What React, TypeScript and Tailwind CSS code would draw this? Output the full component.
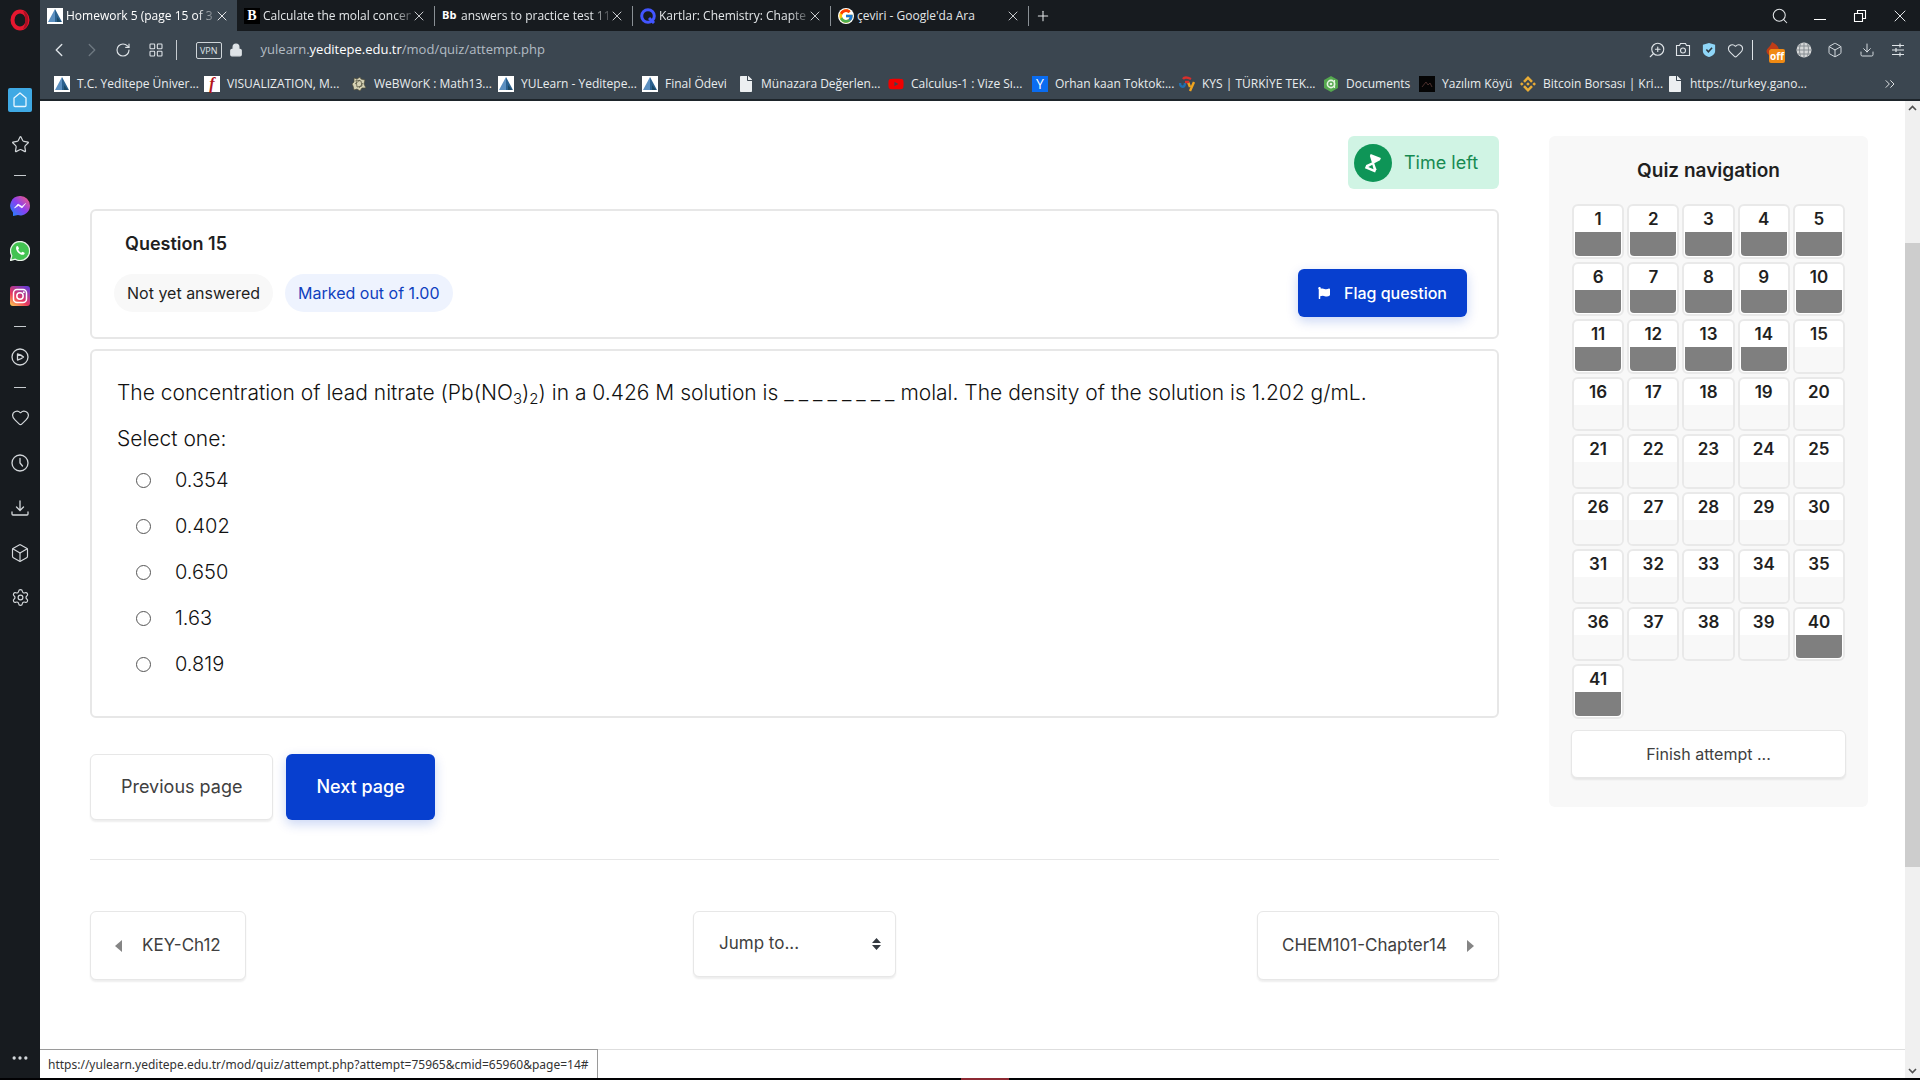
import React from "react";
import {
  ChevronLeft, ChevronRight, RotateCw, LayoutGrid, Lock, X, Plus, Search, ZoomIn, Camera, Heart,
  Box, Download, Star, Settings, ChevronsRight, Ellipsis,
} from "lucide-react";
import { FaFlag, FaYoutube, FaFile } from "react-icons/fa";
import { FcGoogle } from "react-icons/fc";
import { SiBinance } from "react-icons/si";

function YeditepeIcon() {
  return (
    <svg viewBox="0 0 16 16" className="size-4 shrink-0">
      <rect width="16" height="16" fill="#fff" />
      <path d="M8 1 1 14h7z" fill="#5b8fc0" />
      <path d="M8 1v13h7z" fill="#2b618f" />
      <path d="m10 9 4 5h-4z" fill="#1b4965" />
    </svg>
  );
}

function Hexagons() {
  return (
    <svg viewBox="0 0 16 16" className="size-4 shrink-0" fill="none" stroke="#4c4a38" strokeWidth="0.7">
      <path d="m3 2 3 1 3-2 1 2 4 1-1 4 2 4-4 0-2 3-3-2-3 1-1-4-1-2 2-2z" fill="#d5d1b4" />
      <path d="m5 4 5 1 1 5-5 1zM4 8l5-4M8 12l4-5" />
    </svg>
  );
}

function KysIcon() {
  return (
    <svg viewBox="0 0 16 16" className="size-4 shrink-0" fill="none" strokeWidth="2.4">
      <path d="M4 3c2-3 6-1 8 0" stroke="#d92f2c" />
      <path d="M1 7c0 5 5 5 5 0" stroke="#1f6fb0" />
      <path d="m9 6 2 5M15 6l-4 9" stroke="#f0a51e" />
      <path d="M6 6h4" stroke="#d92f2c" />
    </svg>
  );
}

function GreenHex() {
  return (
    <svg viewBox="0 0 16 16" className="size-4 shrink-0">
      <path d="m8 0 7 4v8l-7 4-7-4V4z" fill="#55a84f" />
      <circle cx="8" cy="8" r="3.6" fill="none" stroke="#e4f4e2" strokeWidth="1.6" />
      <circle cx="8" cy="8" r="1.3" fill="#e4f4e2" />
      <path d="M11.500 4v8" stroke="#e4f4e2" strokeWidth="1.2" />
    </svg>
  );
}

function BlackIcon() {
  return (
    <svg viewBox="0 0 16 16" className="size-4 shrink-0">
      <rect width="16" height="16" fill="#050505" />
      <path d="m3 11 4-5 2 3 2-2 2 4" fill="none" stroke="#4a2f2c" strokeWidth="1" />
    </svg>
  );
}

function PageIcon() {
  return <FaFile className="h-4 w-4 shrink-0 text-[#eceff1]" />;
}

const bookmarks: { label: string; icon: React.ReactNode; width: string }[] = [
  { label: "T.C. Yeditepe Üniver...", width: "w-[150px]", icon: <YeditepeIcon /> },
  { label: "VISUALIZATION, M...", width: "w-[147px]", icon: <span className="flex size-4 shrink-0 items-center justify-center bg-white font-['Liberation_Serif',serif] text-base leading-4 font-bold text-[#b3151b] italic">f</span> },
  { label: "WeBWorK : Math13...", width: "w-[147px]", icon: <Hexagons /> },
  { label: "YULearn - Yeditepe...", width: "w-36", icon: <YeditepeIcon /> },
  { label: "Final Ödevi", width: "w-24", icon: <YeditepeIcon /> },
  { label: "Münazara Değerlen...", width: "w-[150px]", icon: <PageIcon /> },
  { label: "Calculus-1 : Vize Sı...", width: "w-36", icon: <FaYoutube className="size-4 shrink-0 text-[#f00000]" /> },
  { label: "Orhan kaan Toktok:...", width: "w-[147px]", icon: <span className="flex size-4 shrink-0 items-center justify-center bg-[#0a6cf0] text-sm leading-4 text-white">Y</span> },
  { label: "KYS | TÜRKİYE TEK...", width: "w-36", icon: <KysIcon /> },
  { label: "Documents", width: "w-24", icon: <GreenHex /> },
  { label: "Yazılım Köyü", width: "w-[101px]", icon: <BlackIcon /> },
  { label: "Bitcoin Borsası | Kri...", width: "w-[147px]", icon: <SiBinance className="size-4 shrink-0 text-[#e9ac35]" /> },
  { label: "https://turkey.gano...", width: "w-[147px]", icon: <PageIcon /> },
];

const tabs: { label: string; icon: React.ReactNode }[] = [
  { label: "Homework 5 (page 15 of 3", icon: <YeditepeIcon /> },
  { label: "Calculate the molal concen", icon: <span className="flex size-4 shrink-0 items-center justify-center bg-black font-['Liberation_Serif',serif] text-sm leading-4 font-bold text-white">B</span> },
  { label: "answers to practice test 11.", icon: <span className="w-4 shrink-0 text-[11px] font-bold text-white">Bb</span> },
  {
    label: "Kartlar: Chemistry: Chapter",
    icon: (
      <svg viewBox="0 0 16 16" className="size-4 shrink-0" fill="none" stroke="#4255ff" strokeWidth="3">
        <circle cx="8" cy="8" r="6.300" />
        <path d="m9 10 5 5" />
      </svg>
    ),
  },
  { label: "çeviri - Google'da Ara", icon: <span className="flex size-4 shrink-0 items-center justify-center rounded-full bg-white"><FcGoogle className="size-4" /></span> },
];

function TabStrip() {
  return (
    <div className="flex h-[31px] items-stretch bg-[#171b1f] text-xs text-[#e3e6e8]">
      {tabs.map((t, i) => (
        <div key={t.label} className={i === 0 ? "flex w-[197px] items-center bg-[#3b4650] text-white" : "flex w-[198px] items-center"}>
          <div className="flex min-w-0 flex-1 items-center gap-[3px] pl-[7px]">
            {t.icon}
            <span className={i < 4 ? "min-w-0 flex-1 whitespace-nowrap [mask-image:linear-gradient(to_right,black_88%,transparent_104%)]" : "min-w-0 flex-1 whitespace-nowrap"}>{t.label}</span>
          </div>
          <button aria-label="Close tab" className="mr-[7px] flex w-4 items-center justify-center">
            <X className="size-4" strokeWidth={1.3} />
          </button>
          {i > 0 && <span className="h-5 w-px bg-[#8a9095]" />}
        </div>
      ))}
      <button aria-label="New tab" className="flex w-7 items-center justify-center">
        <Plus className="size-4" strokeWidth={1.6} />
      </button>
      <div className="ml-auto flex items-center">
        <button aria-label="Search tabs" className="flex w-10 justify-center"><Search className="size-[18px]" strokeWidth={1.4} /></button>
        <button aria-label="Minimize" className="flex w-10 justify-center pt-2"><span className="h-px w-3 bg-white" /></button>
        <button aria-label="Restore" className="flex w-10 justify-center">
          <svg viewBox="0 0 14 14" className="size-[14px]" fill="none" stroke="white" strokeWidth="1.100"><path d="M1.500 4.500h8v8h-8zM4.500 4.500v-3h8v8h-3" /></svg>
        </button>
        <button aria-label="Close" className="flex w-10 justify-center"><X className="size-5" strokeWidth={1.2} /></button>
      </div>
    </div>
  );
}

function Toolbar() {
  return (
    <div className="flex h-[38px] items-center bg-[#3b4650] text-[#dfe4e8]">
      <button aria-label="Back" className="ml-[6px] flex w-[25px] justify-center"><ChevronLeft className="size-[22px]" strokeWidth={1.5} /></button>
      <button aria-label="Forward" className="ml-2 flex w-[25px] justify-center text-[#6e7880]"><ChevronRight className="size-[22px]" strokeWidth={1.5} /></button>
      <button aria-label="Reload" className="ml-[6px] flex w-[25px] justify-center"><RotateCw className="size-4" strokeWidth={1.7} /></button>
      <button aria-label="Speed dial" className="ml-2 flex w-[25px] justify-center"><LayoutGrid className="size-4" strokeWidth={1.6} /></button>
      <span className="ml-2 h-5 w-px bg-[#c5cbd0]" />
      <span className="ml-[19px] rounded-xs border border-[#cfd5d9] px-[3px] text-[9px] leading-[15px]">VPN</span>
      <Lock className="ml-[7px] size-[14px]" fill="#dfe4e8" strokeWidth={2} />
      <span className="ml-[18px] text-[13px] whitespace-nowrap text-[#b3bcc4]">
        yulearn.<span className="text-white">yeditepe.edu.tr</span>/mod/quiz/attempt.php
      </span>
      <div className="ml-auto flex items-center">
        <button aria-label="Zoom" className="flex w-[26px] justify-center"><ZoomIn className="size-[18px] -scale-x-100" strokeWidth={1.5} /></button>
        <button aria-label="Snapshot" className="flex w-[26px] justify-center">
          <svg viewBox="0 0 16 16" className="size-4" fill="none" stroke="currentColor" strokeWidth="1.100"><path d="M1.500 3.500h3l1-2h5l1 2h3v10h-13z" /><circle cx="8" cy="8.500" r="2.500" /></svg>
        </button>
        <button aria-label="Ad blocker" className="flex w-[26px] justify-center">
          <svg viewBox="0 0 16 18" className="h-4 w-[14px]"><path d="M8 1 15 3v7c0 4-4 6-7 7-3-1-7-3-7-7V3z" fill="#8fd6f8" /><path d="m5 8.500 2.300 2.500L11.500 6.500" fill="none" stroke="#2c3943" strokeWidth="1.800" /></svg>
        </button>
        <button aria-label="Favourite" className="flex w-[26px] justify-center"><Heart className="size-[17px]" strokeWidth={1.5} /></button>
        <span className="mx-1 h-5 w-px bg-[#dfe4e8]" />
        <button aria-label="Extension, off" className="relative flex w-[31px] justify-center">
          <svg viewBox="0 0 16 18" className="h-[18px] w-4"><path d="M7 1c4 2 9 6 6 11-2 4-9 4-11 0C0 8 5 7 7 1z" fill="#bf3c16" /><circle cx="5.500" cy="9" r="1" fill="#222" /><circle cx="10" cy="9" r="1" fill="#222" /></svg>
          <span className="absolute top-2 left-3 rounded-xs bg-[#f08a13] px-px text-[10px] leading-[14px] font-bold text-white">off</span>
        </button>
        <button aria-label="Web extension" className="flex w-[31px] justify-center">
          <svg viewBox="0 0 16 16" className="size-4"><circle cx="8" cy="8" r="7.500" fill="#d5d7d8" /><path d="M8 0v16M0 8h16M1.500 4h13M1.500 12h13M5 1c-2 4-2 10 0 14M11 1c2 4 2 10 0 14" fill="none" stroke="#868d92" /></svg>
        </button>
        <button aria-label="Wallet" className="flex w-8 justify-center"><Box className="size-4" strokeWidth={1.4} /></button>
        <button aria-label="Downloads" className="flex w-8 justify-center"><Download className="size-4" strokeWidth={1.4} /></button>
        <button aria-label="Easy setup" className="mr-[7px] flex w-[30px] justify-center">
          <svg viewBox="0 0 14 14" className="size-[14px]" fill="none" stroke="currentColor" strokeWidth="1.200"><path d="M1 2.500h12M1 7h12M1 11.500h12M9 .5v4M5 5v4M9 9.500v4" /></svg>
        </button>
      </div>
    </div>
  );
}

function BookmarksBar() {
  return (
    <nav className="flex h-8 items-center border-b-2 border-[#1d242a] bg-[#3b4650] pb-px pl-[14px] text-xs text-[#e9ecee]">
      {bookmarks.map((b) => (
        <a key={b.label} href="#" className={`${b.width} flex items-center gap-[7px] whitespace-nowrap`}>
          {b.icon}
          <span>{b.label}</span>
        </a>
      ))}
      <button aria-label="More bookmarks" className="mr-[22px] ml-auto"><ChevronsRight className="size-4" strokeWidth={1.4} /></button>
    </nav>
  );
}

function Item({ label, children }: { label: string; children: React.ReactNode }) {
  return <button aria-label={label} className="flex h-[45px] w-full items-center justify-center">{children}</button>;
}

function Dash() {
  return <div className="flex h-4 items-center justify-center"><span className="h-px w-3 bg-[#c7cbce]" /></div>;
}

function Sidebar() {
  return (
    <aside className="flex w-10 shrink-0 flex-col bg-[#171b1f] text-[#d3d7da]">
      <button aria-label="Opera menu" className="mb-[37px] flex h-10 items-center justify-center">
        <svg viewBox="0 0 22 24" className="h-6 w-[22px]"><ellipse cx="11" cy="12" rx="7.500" ry="8.500" fill="none" stroke="#e5172f" strokeWidth="4" /><path d="M14 3c7 1 7 17 0 18 3-4 3-14 0-18z" fill="#a80f22" /></svg>
      </button>
      <Item label="Home">
        <span className="flex size-6 items-center justify-center rounded-xs bg-[#3fa9e4]">
          <svg viewBox="0 0 18 18" className="size-[18px]" fill="none" stroke="#e8f6ff" strokeWidth="1.300" strokeLinejoin="round"><path d="M3 7 9 2l6 5v7.500q0 1-1 1H4q-1 0-1-1z" /></svg>
        </span>
      </Item>
      <Item label="Bookmarks"><Star className="size-[19px]" strokeWidth={1.5} /></Item>
      <Dash />
      <Item label="Messenger">
        <svg viewBox="0 0 20 20" className="size-5">
          <defs><linearGradient id="msg" x1="0" y1="1" x2="1" y2="0"><stop offset="0" stopColor="#168aff" /><stop offset=".5" stopColor="#8a3ff0" /><stop offset="1" stopColor="#ff5f73" /></linearGradient></defs>
          <path d="M10 0a9.700 9.700 0 0 1 10 9.700 9.700 9.700 0 0 1-12 9.400L3 20v-3.500A9.700 9.700 0 0 1 10 0z" fill="url(#msg)" />
          <path d="m4.500 12 3.500-4 4 2.500L15.500 7.500 12 12 8.500 9.500z" fill="white" stroke="white" strokeWidth=".6" />
        </svg>
      </Item>
      <Item label="WhatsApp">
        <svg viewBox="0 0 20 20" className="size-5">
          <path d="M10 .5A9.500 9.500 0 1 1 5.300 18.200L.5 19.500l1.300-4.800A9.500 9.500 0 0 1 10 .5z" fill="#43c351" stroke="#e9f3e9" strokeWidth="1.300" />
          <path d="M6.500 5.500c1-1 1.500-.5 2.500 2l-.8 1.300c.6 1.400 1.600 2.300 3 3l1.300-1.100c2.500 1 2.500 1.500 1.700 2.500-2.700 2.700-10-3.700-7.700-7.700z" fill="white" />
        </svg>
      </Item>
      <Item label="Instagram">
        <svg viewBox="0 0 20 20" className="size-5">
          <defs><linearGradient id="ig" x1=".1" y1="1" x2=".8" y2="0"><stop offset="0" stopColor="#fdc352" /><stop offset=".4" stopColor="#ea3a5d" /><stop offset="1" stopColor="#6a3bd0" /></linearGradient></defs>
          <rect width="20" height="20" rx="3" fill="url(#ig)" />
          <g fill="none" stroke="white" strokeWidth="1.500"><rect x="3.500" y="3.500" width="13" height="13" rx="3.500" /><circle cx="10" cy="10" r="3.200" /></g>
          <circle cx="13.800" cy="6.200" r="1" fill="white" />
        </svg>
      </Item>
      <Dash />
      <Item label="Player">
        <svg viewBox="0 0 18 18" className="size-[18px]" fill="none" stroke="currentColor" strokeWidth="1.300" strokeLinejoin="round"><circle cx="9" cy="9" r="8" /><path d="M6.500 6v6q4-1 6-3-2-2-6-3z" /></svg>
      </Item>
      <Dash />
      <Item label="Favourites"><Heart className="size-[19px]" strokeWidth={1.5} /></Item>
      <Item label="History">
        <svg viewBox="0 0 18 18" className="size-[18px]" fill="none" stroke="currentColor" strokeWidth="1.300" strokeLinecap="round"><circle cx="9" cy="9" r="8" /><path d="M9 4.500V9l2.500 3" /></svg>
      </Item>
      <Item label="Downloads">
        <svg viewBox="0 0 18 18" className="size-[18px]" fill="none" stroke="currentColor" strokeWidth="1.300" strokeLinecap="round"><path d="M9 2v9M5.500 8 9 11.500 12.500 8M1 13v2q0 1 1 1h14q1 0 1-1v-2" /></svg>
      </Item>
      <Item label="Wallet"><Box className="size-[20px]" strokeWidth={1.4} /></Item>
      <Item label="Settings"><Settings className="size-[19px]" strokeWidth={1.5} /></Item>
      <button aria-label="Sidebar setup" className="mt-auto mb-[10px] flex justify-center"><Ellipsis className="size-5" /></button>
    </aside>
  );
}

function QuestionHeader() {
  return (
    <section className="mt-5 rounded-md border-2 border-[#e7e7e7] px-[22px] py-5">
      <h3 className="ml-[11px] text-lg leading-[26px] font-semibold">Question 15</h3>
      <div className="mt-3 flex items-center gap-3 text-base">
        <span className="rounded-full bg-[#f8f8f8] px-[13px] leading-[38px]">Not yet answered</span>
        <span className="rounded-full bg-[#eef3fe] px-[13px] leading-[38px] text-[#0f3fbf]">Marked out of 1.00</span>
        <button className="mr-2 ml-auto flex h-12 items-center gap-[14px] rounded-md bg-[#073fcf] px-5 text-base font-medium text-white shadow-[0_4px_12px_rgba(7,63,207,0.22)]">
          <FaFlag className="size-3" />
          Flag question
        </button>
      </div>
    </section>
  );
}

const answers = ["0.354", "0.402", "0.650", "1.63", "0.819"];

function QuestionBody() {
  return (
    <section className="mt-[10px] rounded-md border-2 border-[#e7e7e7] px-[25px] pt-[27px] pb-[29px] text-[20px] leading-[30px] font-light text-[#111]">
      <p className="text-[21px]">
        The concentration of lead nitrate (Pb(NO<sub className="text-[15px]">3</sub>)<sub className="text-[15px]">2</sub>) in a 0.426 M solution is{" "}
        <span className="inline-flex gap-[5px]">{Array.from("________").map((c, i) => <span key={i}>{c}</span>)}</span>{" "}
        molal. The density of the solution is 1.202 g/mL.
      </p>
      <fieldset className="mt-4">
        <legend className="mb-[3px] text-[21px]">Select one:</legend>
        {answers.map((a) => (
          <label key={a} className="flex h-[46px] items-center pl-[19px]">
            <input type="radio" name="answer" className="mr-6 size-[15px] appearance-none rounded-full border border-[#555] bg-white" />
            {a}
          </label>
        ))}
      </fieldset>
    </section>
  );
}

const lightButton = "flex items-center rounded-md border border-[#e7e7e7] bg-white text-[#404040] shadow-[0_2px_2px_rgba(0,0,0,0.07)]";

function QuizNavigation() {
  return (
    <aside className="w-[319px] shrink-0 self-start rounded-md bg-[#f8f8f8] px-[22px] pt-5 pb-[29px]">
      <h2 className="text-center text-[19px] leading-[30px] font-semibold">Quiz navigation</h2>
      <div className="mx-auto mt-[18px] grid h-[515px] w-[273px] auto-rows-fr grid-cols-5 gap-[3px]">
        {Array.from({ length: 41 }, (_, i) => i + 1).map((n) => (
          <a key={n} href="#" className="flex flex-col rounded-md border-2 border-[#e9e9e9] bg-white text-[17px] font-semibold">
            <span className="text-center leading-[26px]">{n}</span>
            <span className={n < 15 || n > 39 ? "mx-px mb-px flex-1 rounded-b-sm bg-[#7f7f7f]" : "flex-1 rounded-b-sm bg-[#f8f8f8]"} />
          </a>
        ))}
      </div>
      <a href="#" className="mt-[11px] flex h-12 items-center justify-center rounded-md border border-[#e7e7e7] bg-white text-base text-[#404040] shadow-[0_2px_2px_rgba(0,0,0,0.07)]">Finish attempt ...</a>
    </aside>
  );
}

function Hourglass() {
  return (
    <span className="flex size-[38px] items-center justify-center rounded-full bg-[#0e9557]">
      <svg viewBox="0 0 20 20" className="size-5">
        <g transform="rotate(22 10 10)">
          <path d="M4.500 2.500h11v2.300L11 10.200H9L4.500 4.800z" fill="white" />
          <path d="M9 9.500h2l4.500 5v3.500h-11v-3.500z" fill="white" />
          <path d="M10 11.800 12.800 15.500H7.200z" fill="#0e9557" />
        </g>
      </svg>
    </span>
  );
}

function Page() {
  return (
    <div className="flex min-h-0 flex-1 bg-white">
      <div className="relative flex min-w-0 flex-1 flex-col font-['Inter',sans-serif] text-[#1f1f1f]">
        <div className="flex gap-[50px] pt-[35px] pr-[37px] pl-[50px]">
          <main className="min-w-0 flex-1">
            <div className="ml-auto flex h-[53px] w-[151px] items-center gap-3 rounded-md bg-[#d0f4e4] pl-[6px] text-lg text-[#168a52]">
              <Hourglass />
              Time left
            </div>
            <QuestionHeader />
            <QuestionBody />
            <div className="mt-9 flex gap-[13px] text-lg">
              <button className={`${lightButton} h-[66px] px-[30px]`}>Previous page</button>
              <button className="h-[66px] rounded-md bg-[#073fcf] px-[30px] font-medium text-white shadow-[0_4px_12px_rgba(7,63,207,0.22)]">Next page</button>
            </div>
            <hr className="mt-[39px] border-[#e7e7e7]" />
            <div className="mt-[51px] flex items-start justify-between text-[17px]">
              <div className="flex flex-1">
                <a href="#" className={`${lightButton} h-[69px] gap-5 px-6`}>
                  <svg viewBox="0 0 7 12" className="h-3 w-[7px]"><path d="M7 0v12L0 6z" fill="#858585" /></svg>
                  KEY-Ch12
                </a>
              </div>
              <div className="relative">
                <select aria-label="Jump to" className="h-[66px] w-[203px] appearance-none rounded-md border border-[#e7e7e7] bg-white pl-[25px] text-[17px] text-[#404040] shadow-[0_2px_2px_rgba(0,0,0,0.07)]">
                  <option>Jump to...</option>
                </select>
                <svg viewBox="0 0 9 12" className="pointer-events-none absolute top-[27px] right-[15px] h-3 w-[9px]"><path d="M4.500 0 9 5H0zM0 7h9l-4.500 5z" fill="#343a40" /></svg>
              </div>
              <div className="flex flex-1 justify-end">
                <a href="#" className={`${lightButton} h-[69px] gap-5 px-6`}>
                  CHEM101-Chapter14
                  <svg viewBox="0 0 7 12" className="h-3 w-[7px]"><path d="M0 0v12l7-6z" fill="#858585" /></svg>
                </a>
              </div>
            </div>
          </main>
          <QuizNavigation />
        </div>
        <div className="mt-auto h-[29px] border-t border-[#dedede]" />
        <div className="absolute bottom-0 left-0 border-t border-r border-[#9a9a9a] bg-white px-2 pt-px font-['Noto_Sans',sans-serif] text-xs leading-[27px] text-[#333]">
          https://yulearn.yeditepe.edu.tr/mod/quiz/attempt.php?attempt=75965&amp;cmid=65960&amp;page=14#
        </div>
      </div>
      <div className="flex w-[15px] shrink-0 flex-col items-center bg-[#f0f0f0]">
        <svg viewBox="0 0 9 6" className="my-1 h-[6px] w-[9px]"><path d="m1 5 3.500-3.500L8 5" fill="none" stroke="#505050" strokeWidth="1.600" /></svg>
        <div className="mt-32 h-[624px] w-full bg-[#cdcdcd]" />
        <svg viewBox="0 0 9 6" className="mt-auto mb-1 h-[6px] w-[9px]"><path d="m1 1 3.500 3.500L8 1" fill="none" stroke="#505050" strokeWidth="1.600" /></svg>
      </div>
    </div>
  );
}

export default function App() {
  return (
    <div className="flex h-screen flex-col bg-[#020204] font-['Open_Sans',sans-serif]">
      <div className="flex min-h-0 flex-1">
        <Sidebar />
        <div className="flex min-w-0 flex-1 flex-col">
          <TabStrip />
          <Toolbar />
          <BookmarksBar />
          <Page />
        </div>
      </div>
      <div className="flex h-[2px] justify-center pl-[50px]"><span className="w-12 bg-[#8c2932]" /></div>
    </div>
  );
}
